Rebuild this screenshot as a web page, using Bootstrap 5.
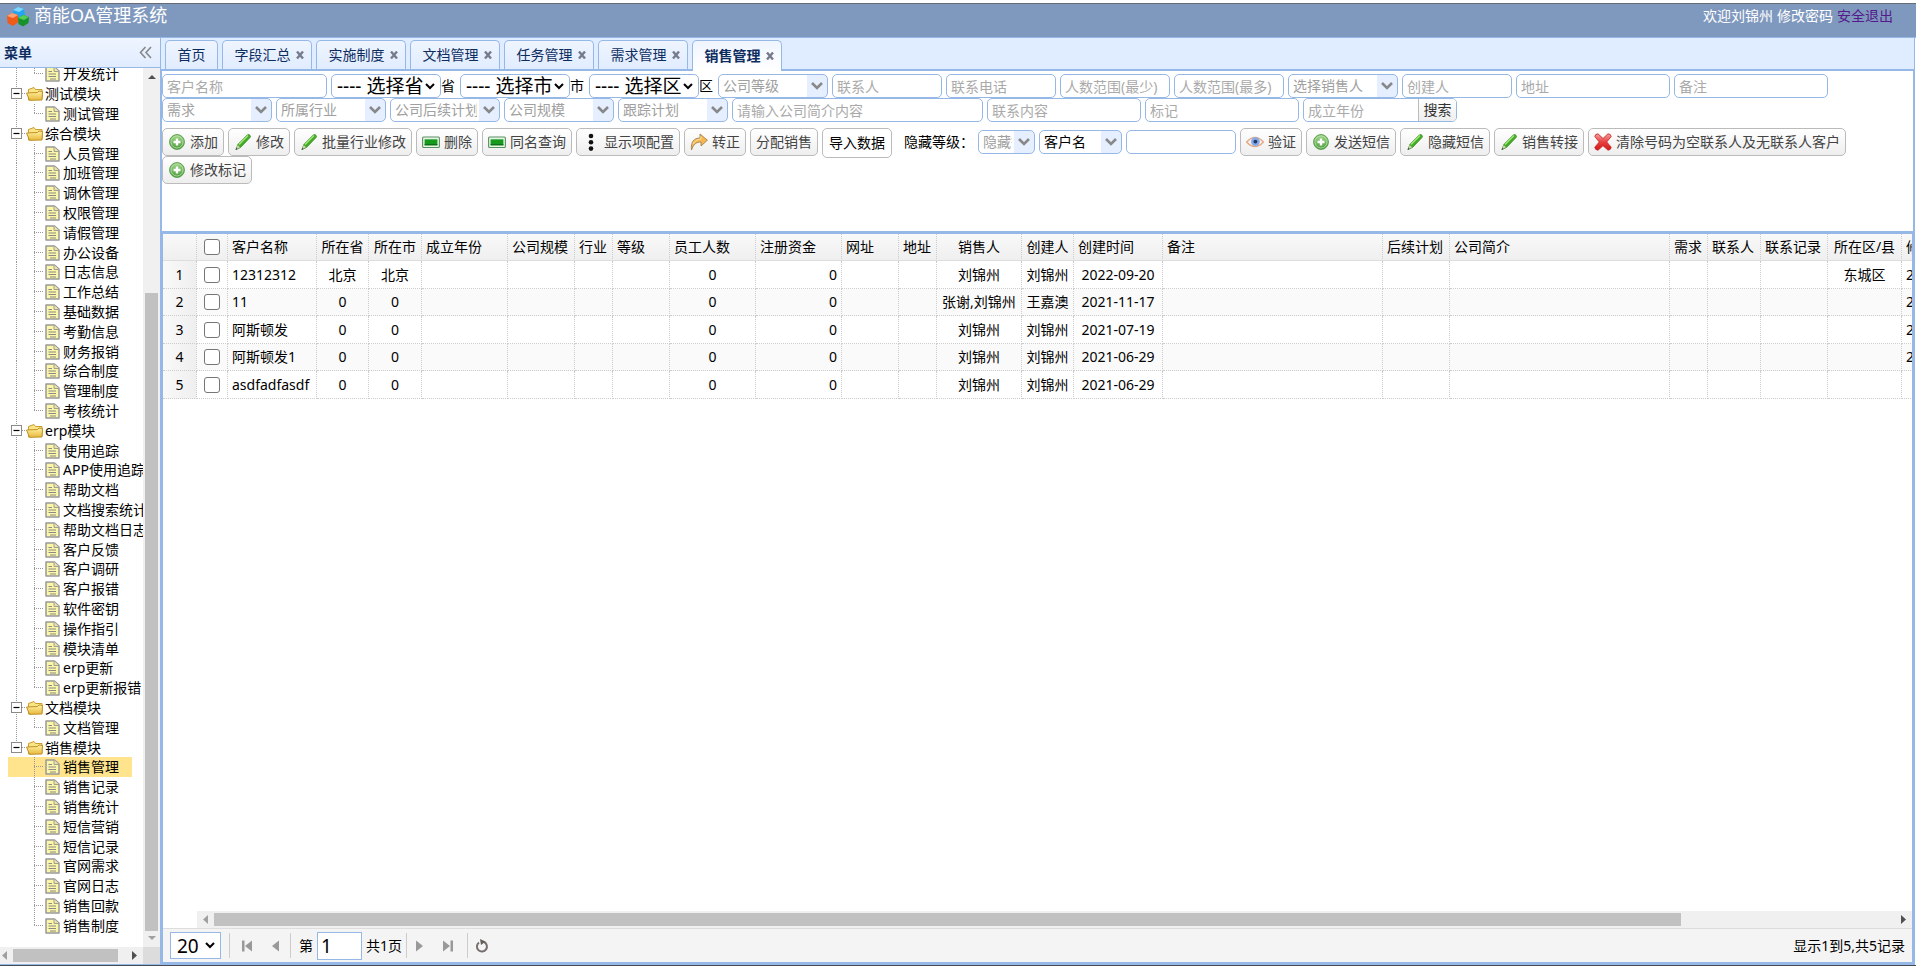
<!DOCTYPE html>
<html lang="zh-CN">
<head>
<meta charset="utf-8">
<meta name="viewport" content="width=device-width, initial-scale=1">
<title>商能OA管理系统</title>
<link rel="stylesheet" href="https://cdn.jsdelivr.net/npm/bootstrap@5.3.0/dist/css/bootstrap.min.css">
<style>
:root{--line:#95b8e7;--navy:#0e2d5f}
body{font:14px/20px "Noto Sans","Noto Sans CJK SC",sans-serif;color:#000}
svg{flex:none;display:block}
.page{border-top:3px solid #fff;border-bottom:1px solid #474c55}
.topbar{height:35px;background:#7f99be;border-top:1px solid #666c76;border-bottom:1px solid var(--line);padding:0 23px 0 6px}
.brand-name{font-size:18px;line-height:22px;color:#fff}
.topbar nav{padding-top:2px}
.topbar a{color:#fff;text-decoration:none}
.topbar a.quit{color:#551a8b}
/* sidebar */
.side{width:160px}
.side-head{height:30px;border-bottom:1px solid var(--line);background:linear-gradient(#eff5ff,#e0ecff);color:var(--navy)}
.side-head button,.tab-x{border:0;background:none;padding:0;color:#777}
.tree{margin-top:-4px}
.tree li{height:20px;width:124px;margin-left:8px;white-space:nowrap}
.tree li:nth-child(5n){height:19px}
.tree li.picked{background:#ffe48d}
.tree a{color:#000;text-decoration:none;margin-left:1px}
.cell{width:18px;flex:none;align-self:stretch}
.rail,.branch,.knob{background-repeat:no-repeat;background-image:repeating-linear-gradient(#999 0 1px,transparent 1px 2px),repeating-linear-gradient(90deg,#999 0 1px,transparent 1px 2px)}
.rail{background-size:1px 100%,0 0;background-position:8px 0}
.branch{background-size:1px 100%,9px 1px;background-position:8px 0,8px 9px}
.branch.end{background-size:1px 10px,9px 1px}
.knob{background-size:1px 100%,4px 1px;background-position:8px 0,14px 9px}
.knob.end{background-size:1px 10px,4px 1px}
.bar{background:#f0f0f0}
.thumb{background:#c1c1c1}
.vbar{width:17px;padding:6px 2px 6px}
.vbar .rest{flex:212 1 0}.vbar .thumb{flex:635 1 0;align-self:stretch}
.hbar{height:17px;padding:2px 4px}
.corner{width:17px;background:#dcdcdc}
.side-foot{border-bottom:1px solid var(--line)}
/* tabs */
.main-pane{border:1px solid var(--line);border-top:0;border-bottom:2px solid var(--line);margin-right:1px}
.tabs{background:#e0ecff;border-bottom:2px solid var(--line);padding:2px 4px 0;gap:4px;height:33px}
.tab{width:90px;height:29px;border:1px solid var(--line);border-bottom:0;border-radius:5px 5px 0 0;background:linear-gradient(#eff5ff,#e0ecff);gap:5px;padding-left:4px}
.tab a{color:var(--navy);text-decoration:none}
.tab.home{width:53px;padding:0}
.tab.on{background:linear-gradient(#eff5ff,#fff);font-weight:bold;height:31px;margin-bottom:-2px}
.tab-body{border:solid var(--line);border-width:0 1px}
/* filters */
.filters{padding-top:3px;column-gap:4px;row-gap:0}
.fld,.pick,.area{height:24px;border:1px solid var(--line);border-radius:5px;font-size:14px;line-height:20px;padding:0 4px;min-height:0;background-color:#fff;color:#000;width:110px}
.fld::placeholder{color:#aaa;opacity:1}
.w165{width:165px}.w154{width:154px}.w250{width:251px}
.pick{appearance:none;padding:0 22px 0 4px;color:#a0a0a0;background-image:url("data:image/svg+xml,%3Csvg xmlns='http://www.w3.org/2000/svg' viewBox='0 0 12 8'%3E%3Cpath d='M1 1l5 5 5-5' fill='none' stroke='%23888' stroke-width='2.6'/%3E%3C/svg%3E"),linear-gradient(#e5efff,#e5efff);background-repeat:no-repeat;background-position:right 4px center,right 0 center;background-size:12px 8px,20px 100%}
.pick.short{width:57px}.pick.mid{width:83px;color:#000}
.area{appearance:none;font-size:19px;line-height:22px;padding:0 15px 0 5px;background-image:url("data:image/svg+xml,%3Csvg xmlns='http://www.w3.org/2000/svg' viewBox='0 0 10 7'%3E%3Cpath d='M1 1l4 4 4-4' fill='none' stroke='%23000' stroke-width='2'/%3E%3C/svg%3E");background-repeat:no-repeat;background-position:right 5px center;background-size:10px 7px}
.unit{width:15px}
.find{border:1px solid var(--line);border-radius:5px;width:154px;height:24px}
.find input{border:0;width:114px;padding:0 4px}
.find button{border:0;border-left:1px solid #bbb;background:linear-gradient(#fff,#eee);padding:0 4px;color:#333}
/* tool buttons */
.tools{padding:6px 0 47px;column-gap:4px;align-items:flex-start}
.tool{height:28px;border:1px solid #bbb;border-radius:5px;background:linear-gradient(#fff,#eee);color:#444;padding:0 5px;gap:4px;line-height:20px;font-size:14px;white-space:nowrap}
.tool svg{width:18px;height:18px}
.tool.plain{padding:0 6px;height:30px;margin-bottom:-2px;background:#fff;color:#000}
.tools .fld,.tools .pick{margin-top:2px}
.tools label{margin:4px 0 0 8px;width:70px}
/* data grid */
.gridbox{border:solid var(--line);border-width:3px 1px 1px}
.data{table-layout:fixed;width:2002px;margin:0;border-collapse:separate;border-spacing:0}
.data th,.data td{height:28px;padding:0 4px;border:0 dotted #ccc;border-width:0 1px 1px 0;font-weight:normal;white-space:nowrap;overflow:hidden;line-height:20px}
.data th{height:27px;background:linear-gradient(#f9f9f9,#efefef);border-bottom:1px solid #ddd}
.data tbody tr:nth-child(even) td{height:27px;background:#fafafa}
.data tbody td.num,.data tbody tr:nth-child(even) td.num{background:linear-gradient(90deg,#f9f9f9,#efefef)}
.data input{appearance:none;width:16px;height:16px;border:1px solid #767676;border-radius:3px;background:#fff;display:block;margin:0 auto}
.c{text-align:center}.r{text-align:right}
.grid-scroll{margin-left:34px}
.grid-scroll .thumb{flex:1467 1 0}.grid-scroll .rest{flex:214 1 0}
.pager{height:34px;background:#f4f4f4;border-top:1px solid #ddd;padding:0 7px}
.pager .sep{width:1px;height:25px;background:#ccc}
.pager button{border:0;background:none;padding:0;width:20px;height:20px}
.psize{appearance:none;width:51px;height:27px;font-size:19px;line-height:24px;padding:0 0 0 6px;border:1px solid var(--line);background:#fff url("data:image/svg+xml,%3Csvg xmlns='http://www.w3.org/2000/svg' viewBox='0 0 10 7'%3E%3Cpath d='M1 1l4 4 4-4' fill='none' stroke='%23000' stroke-width='2'/%3E%3C/svg%3E") no-repeat right 5px center/10px 7px}
.pno{width:45px;height:28px;border:1px solid var(--line);font-size:19px;padding:0 3px}
</style>
</head>
<body>
<svg width="0" height="0" class="position-absolute" aria-hidden="true">
<defs>
<linearGradient id="gr" x2="0" y2="1"><stop stop-color="#a5d98b"/><stop offset="1" stop-color="#4b9a3c"/></linearGradient>
<linearGradient id="fo" x2="0" y2="1"><stop stop-color="#fff2a0"/><stop offset="1" stop-color="#e8b83c"/></linearGradient>
<linearGradient id="rd" x2="0" y2="1"><stop stop-color="#f4a0a0"/><stop offset=".5" stop-color="#e84040"/><stop offset="1" stop-color="#d01818"/></linearGradient>
</defs>
<symbol id="i-add" viewBox="0 0 18 18"><circle cx="9" cy="9" r="7.4" fill="url(#gr)" stroke="#5a9e4c"/><circle cx="9" cy="9" r="6" fill="none" stroke="#b9dfab" stroke-width=".8"/><path d="M9 5.5v7M5.500 9h7" stroke="#fff" stroke-width="2.400"/></symbol>
<symbol id="i-pen" viewBox="0 0 18 18"><path d="M2 16.500l1.800-5L13.500 1.800q1.600-.8 2.700.8.700 1-.2 2L6.500 14.500z" fill="#3fae22" stroke="#3d8a2a" stroke-width=".8"/><path d="M5 11.500l9-9" stroke="#a3e57c" stroke-width="1.500"/><path d="M2 16.500l1.600-4.600 2.400 2.400z" fill="#d6cfae"/><path d="M1.500 17l.9-2.300 1.300 1.300z" fill="#345"/></symbol>
<symbol id="i-del" viewBox="0 0 18 18"><rect x=".6" y="4" width="16.800" height="10.500" rx="1" fill="#e9f5e6" stroke="#5a8f62" stroke-width="1.100"/><rect x="2.600" y="6.300" width="12.800" height="6" fill="#159a1e"/><path d="M2.600 11h12.800v1.300H2.600z" fill="#0d6f18"/></symbol>
<symbol id="i-dots" viewBox="0 0 18 18"><g fill="#111"><circle cx="9" cy="3" r="2.300"/><circle cx="9" cy="9.300" r="2.300"/><circle cx="9" cy="15.600" r="2.300"/></g></symbol>
<symbol id="i-turn" viewBox="0 0 18 18"><path d="M1.500 17C.5 9 4 5 10 5V1l7.400 6.200L11 13V9C6.500 9 3.500 11 1.500 17z" fill="#f7b650" stroke="#a18150" stroke-width=".9"/><path d="M3 11q2-4.500 7.800-4.800V3.500" fill="none" stroke="#ffe2a8" stroke-width="1"/></symbol>
<symbol id="i-eye" viewBox="0 0 18 18"><path d="M.6 9Q9-.2 17.400 9 9 18.200.6 9z" fill="#f7efe8" stroke="#e3a985" stroke-width="1.400"/><circle cx="9.400" cy="8.600" r="4.400" fill="#86a9e6"/><circle cx="9.400" cy="8.600" r="1.900" fill="#20386e"/></symbol>
<symbol id="i-no" viewBox="0 0 18 18"><path d="M.8 3.500q.4-2.600 3.200-2.700l5 4.700 5-4.700q2.800.1 3.200 2.700L12.700 9l4.500 5.200q-.4 2.800-3.200 3L9 12.700l-5 4.500q-2.800-.2-3.200-3L5.300 9z" fill="url(#rd)" stroke="#cc2b2b" stroke-width=".9" stroke-linejoin="round"/></symbol>
<symbol id="i-doc" viewBox="0 0 18 18"><path d="M2 2h8.500L15 6v10H2z" fill="#fbf6a8" stroke="#999" stroke-width="1.500" stroke-linejoin="round"/><path d="M10 2v4.500h5" fill="#e8e2b0" stroke="#a5a08a"/><path d="M4.500 6.500H8M4.500 9h7.500M4.500 11.500h7.500M6 14h6" stroke="#8a8a86" stroke-width="1.100"/></symbol>
<symbol id="i-dir" viewBox="0 0 18 18"><path d="M2.500 15V4.500L8 2.500l1.500 2h6.500V14z" fill="#fbe484" stroke="#c79d35"/><path d="M.5 8l11-.5 1.500-1.500 3.500.5-.5 8.500-12.500.3z" fill="url(#fo)" stroke="#c09028"/></symbol>
<symbol id="i-knob" viewBox="0 0 18 18"><rect x="3.500" y="4.500" width="10" height="10" fill="#fff" stroke="#8a8a8a"/><path d="M5.500 9.500h6" stroke="#000" stroke-width="1.200"/></symbol>
<symbol id="a-l" viewBox="0 0 9 9"><path d="M7 0v9L2 4.500z"/></symbol>
<symbol id="a-r" viewBox="0 0 9 9"><path d="M2 0v9l5-4.500z"/></symbol>
</svg>

<div class="page d-flex flex-column vh-100 overflow-hidden">
<header class="topbar d-flex justify-content-between align-items-start flex-shrink-0">
  <div class="d-flex">
    <svg width="24" height="24" viewBox="0 0 24 24"><path d="M7 6l5-3 6 2 1 6-6 3-6-3z" fill="#25a5ee"/><path d="M7 6l5-3 6 2-5 3z" fill="#7fd6fb"/><path d="M1 12l5-3 6 2 .5 7-5.500 4-5.500-3z" fill="#ee5b1b"/><path d="M1 12l5-3 6 2-5 3z" fill="#ffa070"/><path d="M12 14l5-3 6 2-.5 6-5.500 3.500-4.500-2.500z" fill="#17922b"/><path d="M12 14l5-3 6 2-5 3z" fill="#54cd58"/></svg>
    <span class="brand-name ms-1">商能OA管理系统</span>
  </div>
  <nav class="d-flex gap-1"><span class="text-white">欢迎刘锦州</span><a href="#">修改密码</a><a href="#" class="quit">安全退出</a></nav>
</header>

<div class="d-flex flex-fill overflow-hidden">
<aside class="side d-flex flex-column flex-shrink-0">
  <div class="side-head d-flex align-items-center justify-content-between fw-bold flex-shrink-0 ps-1 pe-2">菜单
    <button type="button" aria-label="收起菜单"><svg width="13" height="13" viewBox="0 0 13 13"><path d="M6.500 1L1.500 6.500l5 5.500M12 1L7 6.500l5 5.500" fill="none" stroke="#888" stroke-width="1.600"/></svg></button>
  </div>
  <div class="d-flex flex-fill overflow-hidden">
    <div class="flex-fill overflow-hidden"><ul class="tree list-unstyled" id="tree"></ul></div>
    <div class="bar vbar d-flex flex-column align-items-center flex-shrink-0">
      <svg width="8" height="6" viewBox="0 0 8 6"><path d="M0 5h8L4 1z" fill="#505050"/></svg>
      <div class="rest"></div><div class="thumb"></div>
      <svg class="mt-1" width="8" height="6" viewBox="0 0 8 6"><path d="M0 1h8L4 5z" fill="#a0a0a0"/></svg>
    </div>
  </div>
  <div class="side-foot d-flex flex-shrink-0">
    <div class="bar hbar d-flex align-items-center flex-fill ps-0">
      <svg width="9" height="9" fill="#a0a0a0"><use href="#a-l"/></svg>
      <div class="thumb h-100 flex-fill ms-1 me-2"></div>
      <svg width="9" height="9" class="ms-1" fill="#505050"><use href="#a-r"/></svg>
    </div>
    <div class="corner"></div>
  </div>
</aside>

<main class="main-pane d-flex flex-column flex-fill overflow-hidden">
  <nav class="tabs d-flex flex-shrink-0" id="tabs">
    <div class="tab home d-flex align-items-center justify-content-center"><a href="#">首页</a></div>
  </nav>
  <div class="tab-body d-flex flex-column flex-fill overflow-hidden">
    <form class="flex-shrink-0" onsubmit="return false">
      <div class="filters d-flex flex-wrap align-items-center">
        <input class="fld w165" placeholder="客户名称" aria-label="客户名称">
        <div class="d-flex align-items-center"><select class="area" id="prov"><option>---- 选择省 ----</option></select><label class="unit" for="prov">省</label></div>
        <div class="d-flex align-items-center"><select class="area" id="city"><option>---- 选择市 ----</option></select><label class="unit" for="city">市</label></div>
        <div class="d-flex align-items-center"><select class="area" id="dist"><option>---- 选择区 ----</option></select><label class="unit" for="dist">区</label></div>
        <select class="pick" aria-label="公司等级"><option>公司等级</option></select>
        <input class="fld" placeholder="联系人" aria-label="联系人">
        <input class="fld" placeholder="联系电话" aria-label="联系电话">
        <input class="fld" placeholder="人数范围(最少)" aria-label="人数范围(最少)">
        <input class="fld" placeholder="人数范围(最多)" aria-label="人数范围(最多)">
        <select class="pick" aria-label="选择销售人"><option>选择销售人</option></select>
        <input class="fld" placeholder="创建人" aria-label="创建人">
        <input class="fld w154" placeholder="地址" aria-label="地址">
        <input class="fld w154" placeholder="备注" aria-label="备注">
        <select class="pick" aria-label="需求"><option>需求</option></select>
        <select class="pick" aria-label="所属行业"><option>所属行业</option></select>
        <select class="pick" aria-label="公司后续计划"><option>公司后续计划</option></select>
        <select class="pick" aria-label="公司规模"><option>公司规模</option></select>
        <select class="pick" aria-label="跟踪计划"><option>跟踪计划</option></select>
        <input class="fld w250" placeholder="请输入公司简介内容" aria-label="公司简介内容">
        <input class="fld w154" placeholder="联系内容" aria-label="联系内容">
        <input class="fld w154" placeholder="标记" aria-label="标记">
        <div class="find d-flex overflow-hidden"><input class="fld h-100" placeholder="成立年份" aria-label="成立年份"><button type="submit" class="flex-fill text-nowrap">搜索</button></div>
      </div>
      <div class="tools d-flex flex-wrap">
        <button type="button" class="tool d-flex align-items-center"><svg><use href="#i-add"/></svg>添加</button>
        <button type="button" class="tool d-flex align-items-center"><svg><use href="#i-pen"/></svg>修改</button>
        <button type="button" class="tool d-flex align-items-center"><svg><use href="#i-pen"/></svg>批量行业修改</button>
        <button type="button" class="tool d-flex align-items-center"><svg><use href="#i-del"/></svg>删除</button>
        <button type="button" class="tool d-flex align-items-center"><svg><use href="#i-del"/></svg>同名查询</button>
        <button type="button" class="tool d-flex align-items-center"><svg><use href="#i-dots"/></svg>显示项配置</button>
        <button type="button" class="tool d-flex align-items-center"><svg><use href="#i-turn"/></svg>转正</button>
        <button type="button" class="tool d-flex align-items-center">分配销售</button>
        <button type="button" class="tool plain d-flex align-items-center">导入数据</button>
        <label for="hide">隐藏等级：</label>
        <select class="pick short" id="hide"><option>隐藏等级</option></select>
        <select class="pick mid" aria-label="查询字段"><option>客户名</option></select>
        <input class="fld" aria-label="查询内容">
        <button type="button" class="tool d-flex align-items-center"><svg><use href="#i-eye"/></svg>验证</button>
        <button type="button" class="tool d-flex align-items-center"><svg><use href="#i-add"/></svg>发送短信</button>
        <button type="button" class="tool d-flex align-items-center"><svg><use href="#i-pen"/></svg>隐藏短信</button>
        <button type="button" class="tool d-flex align-items-center"><svg><use href="#i-pen"/></svg>销售转接</button>
        <button type="button" class="tool d-flex align-items-center"><svg><use href="#i-no"/></svg>清除号码为空联系人及无联系人客户</button>
        <button type="button" class="tool d-flex align-items-center"><svg><use href="#i-add"/></svg>修改标记</button>
      </div>
    </form>
    <section class="gridbox d-flex flex-column flex-fill overflow-hidden">
      <div class="flex-fill overflow-hidden">
        <table class="data" id="data"></table>
      </div>
      <div class="bar hbar grid-scroll d-flex align-items-center flex-shrink-0">
        <svg width="9" height="9" class="me-1" fill="#a0a0a0"><use href="#a-l"/></svg>
        <div class="thumb h-100"></div><div class="rest"></div>
        <svg width="9" height="9" class="ms-1" fill="#505050"><use href="#a-r"/></svg>
      </div>
      <div class="pager d-flex align-items-center justify-content-between flex-shrink-0">
        <div class="d-flex align-items-center">
          <select class="psize me-2" aria-label="每页条数"><option>20</option></select>
          <span class="sep me-2"></span>
          <button type="button" aria-label="首页"><svg width="20" height="20" viewBox="0 0 20 20" fill="#999"><path d="M4 4.500h2.500v11H4zM14 4.500v11L7 10z"/></svg></button>
          <button type="button" class="ms-2" aria-label="上一页"><svg width="20" height="20" viewBox="0 0 20 20" fill="#999"><path d="M13 4.500v11L6 10z"/></svg></button>
          <span class="sep ms-1 me-2"></span>
          <label for="pno">第</label><input class="pno mx-1" id="pno" value="1"><span>共1页</span>
          <span class="sep mx-1"></span>
          <button type="button" aria-label="下一页"><svg width="20" height="20" viewBox="0 0 20 20" fill="#999"><path d="M5 4.500v11l7-5.500z"/></svg></button>
          <button type="button" class="ms-2" aria-label="末页"><svg width="20" height="20" viewBox="0 0 20 20" fill="#999"><path d="M4 4.500v11l7-5.500zM11.500 4.500H14v11h-2.500z"/></svg></button>
          <span class="sep ms-2 me-1"></span>
          <button type="button" aria-label="刷新"><svg width="20" height="20" viewBox="0 0 20 20"><path d="M12 6a5 5 0 1 1-5 .5" fill="none" stroke="#776d6d" stroke-width="2"/><path d="M8 3l5.500 2.500L9 9z" fill="#665c5c"/></svg></button>
        </div>
        <span>显示1到5,共5记录</span>
      </div>
    </section>
  </div>
</main>
</div>
</div>

<script>
const icon = (id, cls = '') => `<svg class="${cls}" width="18" height="18"><use href="#${id}"/></svg>`;

// Open tabs
const tabs = ['字段汇总', '实施制度', '文档管理', '任务管理', '需求管理', '销售管理'];
document.getElementById('tabs').insertAdjacentHTML('beforeend', tabs.map(t =>
  `<div class="tab d-flex align-items-center justify-content-center${t === '销售管理' ? ' on' : ''}"><a href="#">${t}</a><button type="button" class="tab-x" aria-label="关闭${t}"><svg width="8" height="8" viewBox="0 0 8 8"><path d="M1 .5l6 7M7 .5l-6 7" stroke="#777c8c" stroke-width="2.400"/></svg></button></div>`).join(''));

// Menu tree: [module, pages]
const menu = [
  ['', ['开发统计']],
  ['测试模块', ['测试管理']],
  ['综合模块', ['人员管理', '加班管理', '调休管理', '权限管理', '请假管理', '办公设备', '日志信息', '工作总结', '基础数据', '考勤信息', '财务报销', '综合制度', '管理制度', '考核统计']],
  ['erp模块', ['使用追踪', 'APP使用追踪', '帮助文档', '文档搜索统计', '帮助文档日志', '客户反馈', '客户调研', '客户报错', '软件密钥', '操作指引', '模块清单', 'erp更新', 'erp更新报错']],
  ['文档模块', ['文档管理']],
  ['销售模块', ['销售管理', '销售记录', '销售统计', '短信营销', '短信记录', '官网需求', '官网日志', '销售回款', '销售制度']]
];
let html = '';
menu.forEach(([name, pages], m) => {
  const last = m === menu.length - 1;
  if (name) html += `<li class="d-flex align-items-center"><span class="cell knob${last ? ' end' : ''}">${icon('i-knob')}</span>${icon('i-dir')}<a href="#">${name}</a></li>`;
  pages.forEach((p, i) => {
    html += `<li class="d-flex align-items-center${p === '销售管理' ? ' picked' : ''}"><span class="cell${last ? '' : ' rail'}"></span><span class="cell branch${i === pages.length - 1 ? ' end' : ''}"></span>${icon('i-doc')}<a href="#">${p}</a></li>`;
  });
});
document.getElementById('tree').innerHTML = html;

// Customer table: [title, width, cell class, header class]
const cols = [['', 34, 'num c'], ['#', 31, ''], ['客户名称', 89, ''], ['所在省', 52, 'c'], ['所在市', 53, 'c'], ['成立年份', 86, ''], ['公司规模', 67, ''], ['行业', 38, ''], ['等级', 57, ''], ['员工人数', 86, 'c', ''], ['注册资金', 86, 'r', ''], ['网址', 57, ''], ['地址', 38, ''], ['销售人', 85, 'c'], ['创建人', 52, 'c'], ['创建时间', 89, 'c', ''], ['备注', 220, ''], ['后续计划', 67, ''], ['公司简介', 220, ''], ['需求', 38, ''], ['联系人', 53, ''], ['联系记录', 67, ''], ['所在区/县', 74, 'c'], ['修改时间', 263, '']];
const rows = [
  ['12312312', '北京', '北京', '刘锦州', '刘锦州', '2022-09-20', '东城区', '2022-09-20'],
  ['11', '0', '0', '张谢,刘锦州', '王嘉澳', '2021-11-17', '', '2021-11-17'],
  ['阿斯顿发', '0', '0', '刘锦州', '刘锦州', '2021-07-19', '', '2021-07-19'],
  ['阿斯顿发1', '0', '0', '刘锦州', '刘锦州', '2021-06-29', '', '2021-06-29'],
  ['asdfadfasdf', '0', '0', '刘锦州', '刘锦州', '2021-06-29', '', '']
];
const box = n => `<input type="checkbox" aria-label="${n}">`;
document.getElementById('data').innerHTML =
  '<colgroup>' + cols.map(c => `<col style="width:${c[1]}px">`).join('') + '</colgroup><thead><tr>' +
  cols.map(c => `<th class="${c[3] ?? c[2]}">${c[0] === '#' ? box('全选') : c[0]}</th>`).join('') + '</tr></thead><tbody>' +
  rows.map((r, i) => {
    const v = [i + 1, box('选择第' + (i + 1) + '行'), r[0], r[1], r[2], '', '', '', '', '0', '0', '', '', r[3], r[4], r[5], '', '', '', '', '', '', r[6], r[7]];
    return '<tr>' + v.map((x, k) => `<td class="${cols[k][2]}">${x}</td>`).join('') + '</tr>';
  }).join('') + '</tbody>';
</script>
<script src="https://cdn.jsdelivr.net/npm/bootstrap@5.3.0/dist/js/bootstrap.bundle.min.js"></script>
</body>
</html>
